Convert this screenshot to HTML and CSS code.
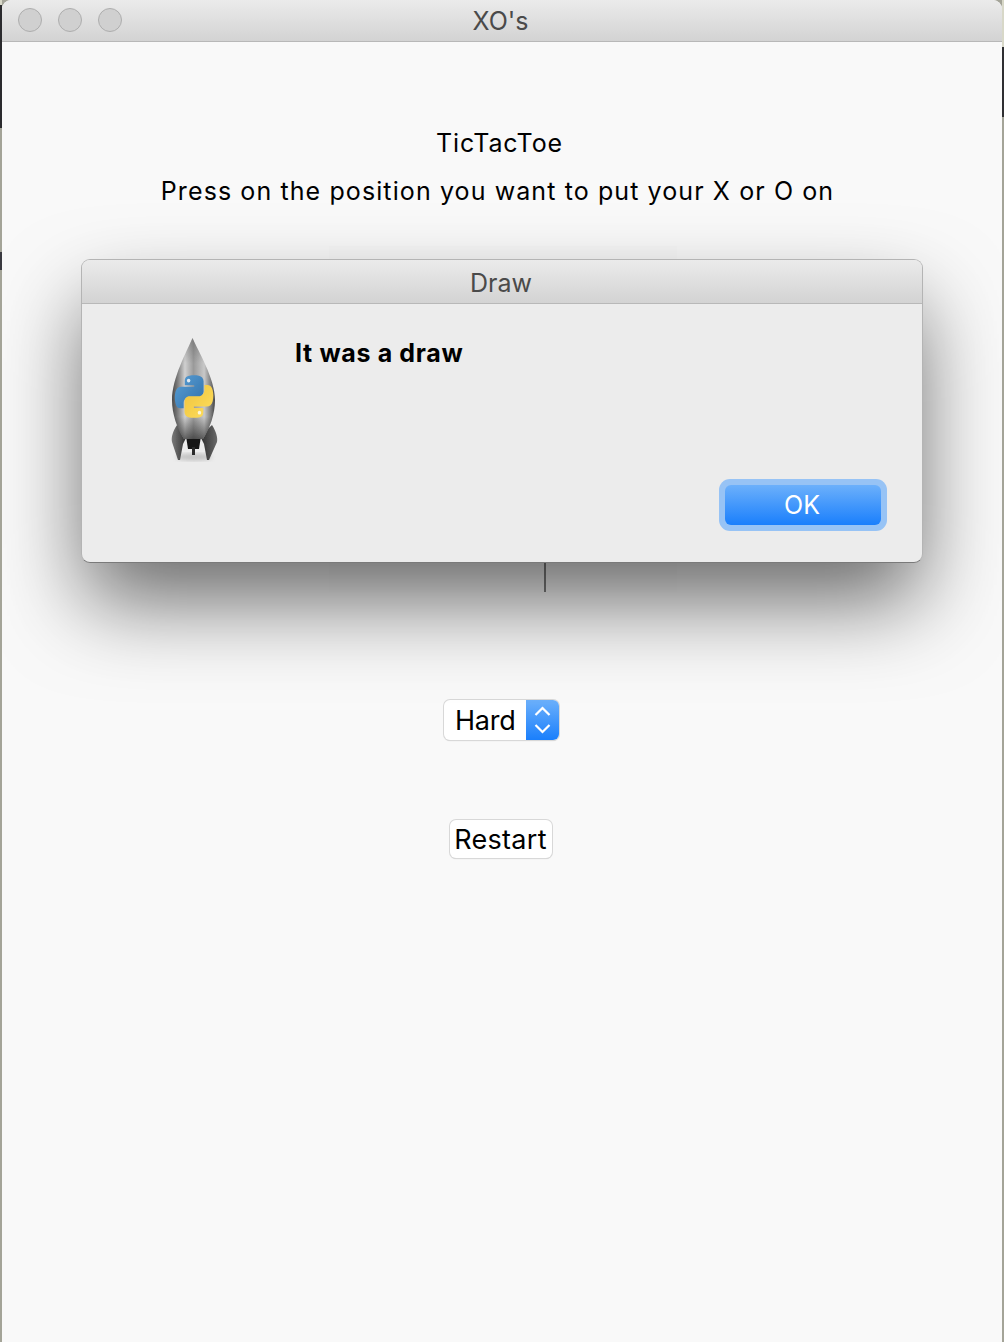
FILE: index.html
```html
<!DOCTYPE html>
<html lang="en">
<head>
<meta charset="utf-8">
<title>XO's</title>
<link rel="stylesheet" href="styles.css">
</head>
<body>
<div class="window">
  <header class="titlebar">
    <div class="traffic"><span class="light"></span><span class="light"></span><span class="light"></span></div>
    <div class="wintitle">XO's</div>
  </header>
  <main class="content">
    <div class="heading">TicTacToe</div>
    <div class="instruction">Press on the position you want to put your X or O on</div>
    <div class="board"><span class="gridline"></span></div>
    <div class="select"><span class="select-label">Hard</span><span class="select-arrows">
      <svg width="17" height="40" viewBox="0 0 17 40"><path class="chev" d="M1.500 15 L8.500 8 L15.500 15 M1.500 25 L8.500 32 L15.500 25"/></svg>
    </span></div>
    <div class="restart">Restart</div>
  </main>
  <section class="dialog">
    <div class="dialog-title">Draw</div>
    <div class="dialog-body">
      <svg class="rocket" width="60" height="130" viewBox="164 335 60 130">
        <defs>
          <linearGradient id="metal" x1="0" x2="1" y1="0" y2="0">
            <stop offset="0" stop-color="#4a4a4a"/><stop offset=".12" stop-color="#777"/><stop offset=".3" stop-color="#d0d0d0"/><stop offset=".5" stop-color="#9a9a9a"/><stop offset=".75" stop-color="#c8c8c8"/><stop offset=".9" stop-color="#7e7e7e"/><stop offset="1" stop-color="#454545"/>
          </linearGradient>
          <linearGradient id="shade" x1="0" x2="0" y1="0" y2="1">
            <stop offset="0" stop-color="#333" stop-opacity=".3"/><stop offset=".25" stop-color="#333" stop-opacity="0"/><stop offset=".78" stop-color="#222" stop-opacity="0"/><stop offset="1" stop-color="#222" stop-opacity=".65"/>
          </linearGradient>
          <linearGradient id="fin" x1="0" x2="1" y1="0" y2="0">
            <stop offset="0" stop-color="#7a7a7a"/><stop offset="1" stop-color="#2c2c2c"/>
          </linearGradient>
          <linearGradient id="fin2" x1="0" x2="1" y1="0" y2="0">
            <stop offset="0" stop-color="#2c2c2c"/><stop offset="1" stop-color="#6a6a6a"/>
          </linearGradient>
          <linearGradient id="blue" x1="0" x2="1" y1="0" y2="1">
            <stop offset="0" stop-color="#5aa0d6"/><stop offset="1" stop-color="#2f6ea8"/>
          </linearGradient>
          <linearGradient id="yellow" x1="0" x2="1" y1="0" y2="1">
            <stop offset="0" stop-color="#ffdf5e"/><stop offset="1" stop-color="#eec23c"/>
          </linearGradient>
          <filter id="soft"><feGaussianBlur stdDeviation=".5"/></filter>
          <filter id="ground"><feGaussianBlur stdDeviation="2"/></filter>
        </defs>
        <ellipse cx="194" cy="457" rx="18" ry="3.500" fill="#999" opacity=".5" filter="url(#ground)"/>
        <g filter="url(#soft)">
          <path d="M177 425 C173 431 171 437 172 442 L178 460 L180 460 L183 444 L187 436 Z" fill="url(#fin)"/>
          <path d="M212 425 C216 431 218 438 217 442 L209 460 L207 460 L204 444 L200 436 Z" fill="url(#fin2)"/>
          <path d="M186 436 H201 L199 449 H188 Z" fill="#161616"/>
          <rect x="192" y="447" width="3" height="8" fill="#2a2a2a"/>
          <path d="M192.500 338 C187 351 172 378 172 400 C172 414 177 428 184 439 H203 C210 428 215 414 215 400 C215 378 198 351 192.500 338 Z" fill="url(#metal)"/>
          <path d="M192.500 338 C187 351 172 378 172 400 C172 414 177 428 184 439 H203 C210 428 215 414 215 400 C215 378 198 351 192.500 338 Z" fill="url(#shade)"/>
        </g>
        <g transform="translate(175 375) scale(.345 .39)" filter="url(#soft)">
          <path fill="url(#blue)" d="M54.900 .9C50.300 .9 45.900 1.300 42 2 30.500 4 28.400 8.300 28.400 16.100V26.500H55.600V30H18.200C10.300 30 3.400 34.700 1.200 43.800-1.300 54.200-1.400 60.700 1.200 71.500 3.100 79.600 7.800 85.300 15.700 85.300H25V72.900C25 63.900 32.800 56 42 56H69.200C76.800 56 82.800 49.800 82.800 42.300V16.100C82.800 8.700 76.600 3.200 69.200 2 64.500 1.200 59.600 .9 54.900 .9Z"/>
          <circle cx="39.500" cy="14.300" r="5" fill="#dfeaf3"/>
          <g transform="rotate(180 55.200 55.400)">
            <path fill="url(#yellow)" d="M54.900 .9C50.300 .9 45.900 1.300 42 2 30.500 4 28.400 8.300 28.400 16.100V26.500H55.600V30H18.200C10.300 30 3.400 34.700 1.200 43.800-1.300 54.200-1.400 60.700 1.200 71.500 3.100 79.600 7.800 85.300 15.700 85.300H25V72.900C25 63.900 32.800 56 42 56H69.200C76.800 56 82.800 49.800 82.800 42.300V16.100C82.800 8.700 76.600 3.200 69.200 2 64.500 1.200 59.600 .9 54.900 .9Z"/>
            <circle cx="39.500" cy="14.300" r="5" fill="#fdf6d8"/>
          </g>
        </g>
      </svg>
      <div class="dialog-main">
        <div class="message">It was a draw</div>
        <div class="actions"><div class="ok-ring"><div class="ok">OK</div></div></div>
      </div>
    </div>
  </section>
</div>
</body>
</html>
```
FILE: styles.css
```css
* { box-sizing: border-box; }
html, body { margin: 0; height: 100%; }
body {
  width: 1004px;
  height: 1342px;
  overflow: hidden;
  background-color: #a4a498;
  background-image:
    linear-gradient(to bottom, #d8d8c8 0, #d8d8c8 5px, #2b2b2e 5px, #2b2b2e 128px, #a4a498 128px, #a4a498 252px, #3a3a40 252px, #3a3a40 270px, #a4a498 270px),
    linear-gradient(to bottom, #d8d8c8 0, #d8d8c8 47px, #2f2f32 47px, #2f2f32 117px, #a4a498 117px);
  background-size: 2px 100%, 2px 100%;
  background-position: left top, right top;
  background-repeat: no-repeat;
  font-family: Inter, "Liberation Sans", sans-serif;
  color: #000;
}
.window {
  position: relative;
  width: 1000px;
  height: 1342px;
  margin-left: 2px;
  background: #f9f9f9;
  border-radius: 9px 9px 0 0;
  overflow: hidden;
  display: flex;
  flex-direction: column;
}
.titlebar {
  height: 42px;
  flex: none;
  position: relative;
  display: flex;
  align-items: center;
  justify-content: center;
  background: linear-gradient(to bottom, #ebebeb, #d3d3d3);
  border-bottom: 1px solid #b8b8b8;
}
.traffic {
  position: absolute;
  left: 16px;
  top: 8px;
  display: flex;
  gap: 16px;
}
.light {
  width: 24px;
  height: 24px;
  border-radius: 50%;
  background: #d0d0d0;
  border: 1px solid #adadad;
}
.wintitle {
  font-size: 25px;
  color: #4a4a4a;
  margin-left: -3px;
}
.content {
  display: flex;
  flex-direction: column;
  align-items: center;
  padding-top: 85px;
}
.heading {
  font-size: 25px;
  line-height: 32px;
  letter-spacing: .9px;
  margin-left: -5px;
}
.instruction {
  font-size: 25px;
  line-height: 32px;
  letter-spacing: 1.100px;
  margin-top: 16px;
  margin-left: -9px;
}
.board {
  width: 348px;
  height: 346px;
  margin-top: 39px;
  margin-left: 2px;
  position: relative;
  background: #f7f7f7;
}
.gridline {
  position: absolute;
  left: 215px;
  bottom: 0;
  width: 2px;
  height: 60px;
  background: #808080;
}
.select {
  margin-top: 108px;
  margin-left: -1px;
  width: 115px;
  height: 40px;
  display: flex;
  background: #fff;
  border-radius: 6px;
  box-shadow: 0 0 0 1px #d8d8d8, 0 1px 1px rgba(0,0,0,.2);
  overflow: hidden;
}
.select-label {
  flex: 1;
  font-size: 27px;
  line-height: 42px;
  padding-left: 11px;
  letter-spacing: -.2px;
}
.select-arrows {
  width: 33px;
  display: flex;
  align-items: center;
  justify-content: center;
  background: linear-gradient(to bottom, #6cb0fb, #1a7ffc);
}
.chev {
  fill: none;
  stroke: #fff;
  stroke-width: 2.200;
}
.restart {
  margin-top: 80px;
  margin-left: -3px;
  width: 102px;
  height: 38px;
  font-size: 27px;
  line-height: 39px;
  letter-spacing: .3px;
  text-align: center;
  white-space: nowrap;
  background: #fff;
  border-radius: 6px;
  box-shadow: 0 0 0 1px #d8d8d8, 0 1px 1px rgba(0,0,0,.2);
}
.dialog {
  position: absolute;
  left: 79px;
  top: 259px;
  width: 842px;
  height: 304px;
  border-radius: 9px;
  background: #ececec;
  border: 1px solid #b4b4b4;
  border-bottom-color: #7a7a7a;
  box-shadow: 0 42px 85px -4px rgba(0,0,0,.58);
  display: flex;
  flex-direction: column;
}
.dialog-title {
  height: 44px;
  flex: none;
  border-radius: 8px 8px 0 0;
  background: linear-gradient(to bottom, #ebebeb, #d3d3d3);
  border-bottom: 1px solid #b8b8b8;
  font-size: 25px;
  line-height: 46px;
  color: #4a4a4a;
  text-align: center;
  padding-right: 2px;
}
.dialog-body {
  flex: 1;
  display: flex;
  padding: 31px 35px 31px 82px;
}
.rocket {
  flex: none;
}
.dialog-main {
  flex: 1;
  margin-left: 71px;
  display: flex;
  flex-direction: column;
  justify-content: space-between;
}
.message {
  font-size: 25px;
  font-weight: 700;
  line-height: 36px;
  letter-spacing: .65px;
}
.actions {
  display: flex;
  justify-content: flex-end;
}
.ok-ring {
  padding: 6px;
  border-radius: 11px;
  background: #97c3f5;
}
.ok {
  width: 156px;
  height: 40px;
  border-radius: 6px;
  background: linear-gradient(to bottom, #6cb0fb, #1a7ffc);
  color: #fff;
  font-size: 25px;
  line-height: 40px;
  text-align: center;
  padding-right: 2px;
}
```
